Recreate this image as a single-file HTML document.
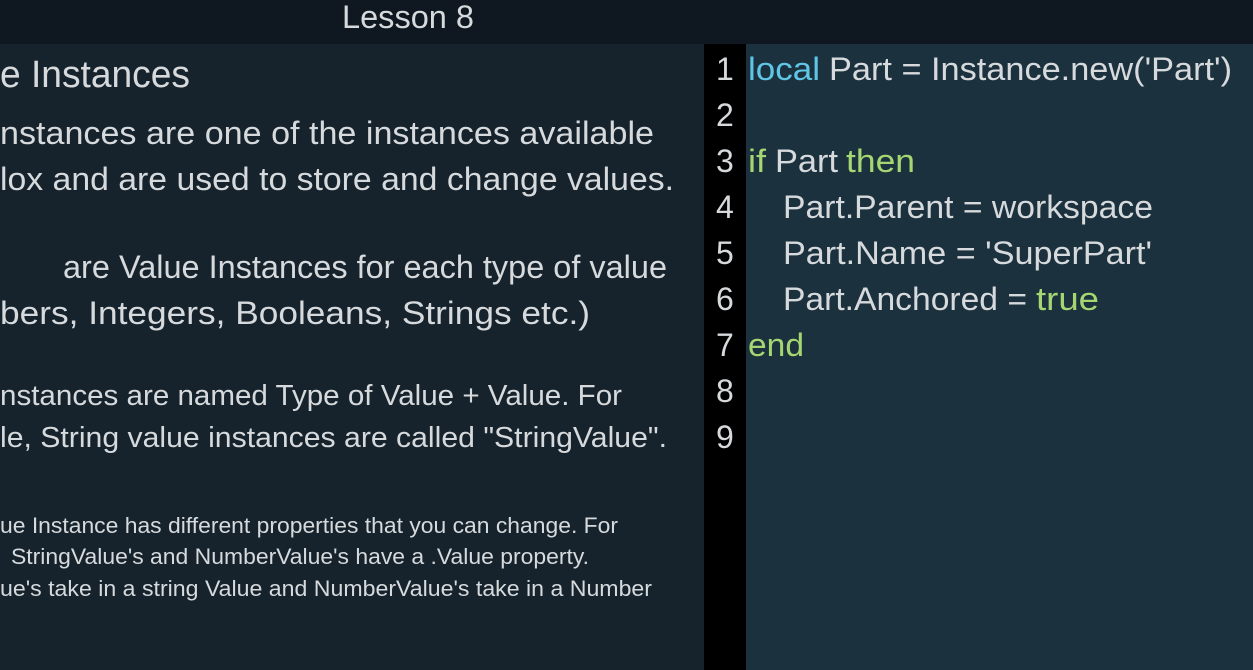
<!DOCTYPE html>
<html><head><meta charset="utf-8"><style>
html,body{margin:0;padding:0;width:1253px;height:670px;overflow:hidden;background:#16232c}
svg{display:block}
text{font-family:"Liberation Sans",sans-serif;fill:#d6dadd}
</style></head><body>
<svg width="1253" height="670" viewBox="0 0 1253 670">
<rect x="0" y="0" width="1253" height="670" fill="#16232c"/>
<rect x="0" y="0" width="1253" height="44" fill="#0f1820"/>
<rect x="704" y="44" width="42" height="626" fill="#000"/>
<rect x="746" y="44" width="507" height="626" fill="#1c313e"/>
<text x="342" y="28" font-size="32" textLength="132" lengthAdjust="spacingAndGlyphs">Lesson 8</text>

<text x="0" y="87" font-size="38" textLength="190" lengthAdjust="spacingAndGlyphs">e Instances</text>
<text x="0" y="144" font-size="32" textLength="654" lengthAdjust="spacingAndGlyphs">nstances are one of the instances available</text>
<text x="0" y="190" font-size="32" textLength="674" lengthAdjust="spacingAndGlyphs">lox and are used to store and change values.</text>
<text x="63" y="278" font-size="32" textLength="604" lengthAdjust="spacingAndGlyphs">are Value Instances for each type of value</text>
<text x="0" y="324" font-size="32" textLength="590" lengthAdjust="spacingAndGlyphs">bers, Integers, Booleans, Strings etc.)</text>
<text x="0" y="405" font-size="29" textLength="622" lengthAdjust="spacingAndGlyphs">nstances are named Type of Value + Value. For</text>
<text x="0" y="447" font-size="29" textLength="667" lengthAdjust="spacingAndGlyphs">le, String value instances are called "StringValue".</text>
<text x="0" y="533" font-size="22" textLength="618" lengthAdjust="spacingAndGlyphs">ue Instance has different properties that you can change. For</text>
<text x="11" y="564" font-size="22" textLength="578" lengthAdjust="spacingAndGlyphs">StringValue's and NumberValue's have a .Value property.</text>
<text x="0" y="596" font-size="22" textLength="652" lengthAdjust="spacingAndGlyphs">ue's take in a string Value and NumberValue's take in a Number</text>

<g font-size="32">
<text x="716" y="80">1</text>
<text x="716" y="126">2</text>
<text x="716" y="172">3</text>
<text x="716" y="218">4</text>
<text x="716" y="264">5</text>
<text x="716" y="310">6</text>
<text x="716" y="356">7</text>
<text x="716" y="402">8</text>
<text x="716" y="448">9</text>

<text x="748" y="80" style="fill:#5fc6e6" textLength="72" lengthAdjust="spacingAndGlyphs">local</text>
<text x="829" y="80" textLength="403" lengthAdjust="spacingAndGlyphs">Part = Instance.new('Part')</text>
<text x="748" y="172" style="fill:#a5d672" textLength="18" lengthAdjust="spacingAndGlyphs">if</text>
<text x="775" y="172" textLength="63" lengthAdjust="spacingAndGlyphs">Part</text>
<text x="846" y="172" style="fill:#a5d672" textLength="69" lengthAdjust="spacingAndGlyphs">then</text>
<text x="783" y="218" textLength="370" lengthAdjust="spacingAndGlyphs">Part.Parent = workspace</text>
<text x="783" y="264" textLength="369" lengthAdjust="spacingAndGlyphs">Part.Name = 'SuperPart'</text>
<text x="783" y="310" textLength="244" lengthAdjust="spacingAndGlyphs">Part.Anchored =</text>
<text x="1036" y="310" style="fill:#a5d672" textLength="63" lengthAdjust="spacingAndGlyphs">true</text>
<text x="748" y="356" style="fill:#a5d672" textLength="56" lengthAdjust="spacingAndGlyphs">end</text>
</g>
</svg>
</body></html>
